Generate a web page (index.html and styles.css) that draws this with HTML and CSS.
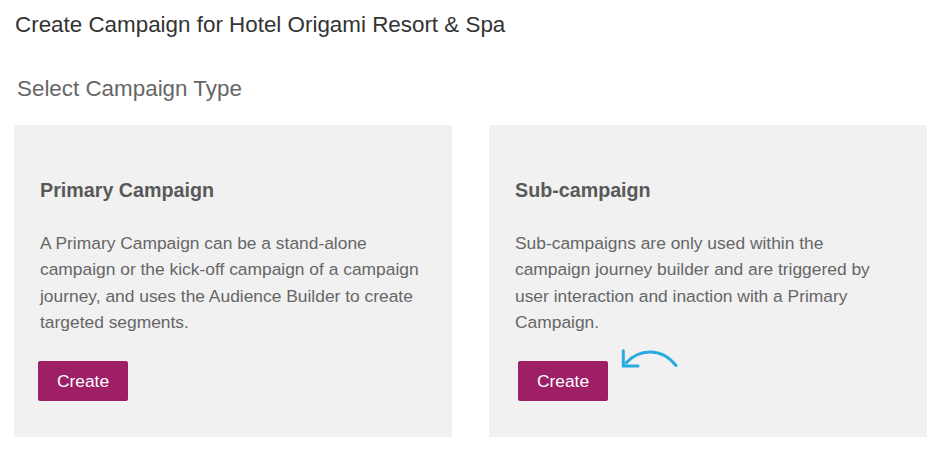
FILE: index.html
```html
<!DOCTYPE html>
<html lang="en">
<head>
  <meta charset="UTF-8" />
  <meta name="viewport" content="width=device-width, initial-scale=1.0"/>
  <title>Create Campaign</title>
  <link rel="stylesheet" href="styles.css">
</head>
<body>
  <h1 class="page-title">Create Campaign for Hotel Origami Resort &amp; Spa</h1>
  <h2 class="section-title">Select Campaign Type</h2>

  <div class="types">
    <div class="type-card">
      <h3>Primary Campaign</h3>
      <p>A Primary Campaign can be a stand-alone campaign or the kick-off campaign of a campaign journey, and uses the Audience Builder to create targeted segments.</p>
      <div class="actions">
        <a href="#" class="button">Create</a>
      </div>
    </div>

    <div class="type-card sub">
      <h3>Sub-campaign</h3>
      <p>Sub-campaigns are only used within the campaign journey builder and are triggered by user interaction and inaction with a Primary Campaign.</p>
      <div class="actions">
        <a href="#" class="button">Create</a>
        <!-- hint arrow curling back to the button -->
        <svg class="hint" width="62" height="24" viewBox="0 0 62 24">
          <path d="M8 17 C 21 3, 43 1, 58 19.5" fill="none" stroke="#29abe2" stroke-width="3" stroke-linecap="round"/>
          <path d="M5.3 4.8 L5.3 20 L20 20" fill="none" stroke="#29abe2" stroke-width="3" stroke-linecap="round"/>
        </svg>
      </div>
    </div>
  </div>
</body>
</html>
```

FILE: styles.css
```css
body {
  font-family: "Liberation Sans", Arial, sans-serif;
  background-color: white;
  margin: 0;
  padding: 0 14px;
  color: #333;
}

.page-title {
  font-size: 22.4px;
  font-weight: normal;
  color: #333;
  margin: 0;
  padding: 12px 0 0 1px;
  line-height: 26px;
}

.section-title {
  font-size: 22.4px;
  font-weight: normal;
  color: #666;
  margin: 0;
  padding: 38px 0 0 3px;
  line-height: 26px;
}

.types {
  display: grid;
  grid-template-columns: 438px 438px;
  gap: 37px;
  margin-top: 23px;
}

.type-card {
  background-color: #f1f1f1;
  height: 312px;
  box-sizing: border-box;
  padding: 52px 26px 0 26px;
}

.type-card h3 {
  font-size: 19.7px;
  font-weight: bold;
  color: #595959;
  margin: 0;
  line-height: 26px;
}

.type-card p {
  font-size: 17.4px;
  line-height: 26.3px;
  color: #666;
  margin: 27px 0 0 0;
}

.actions {
  display: flex;
  align-items: flex-start;
  margin-top: 26px;
  margin-left: -2px;
}

.sub .actions {
  margin-left: 3px;
}

a.button {
  display: inline-block;
  background-color: #9e1f66;
  color: white;
  width: 90px;
  height: 40px;
  line-height: 40px;
  text-align: center;
  text-decoration: none;
  border-radius: 2px;
  font-size: 17.4px;
}

.hint {
  margin-left: 10px;
  margin-top: -15px;
}
```
